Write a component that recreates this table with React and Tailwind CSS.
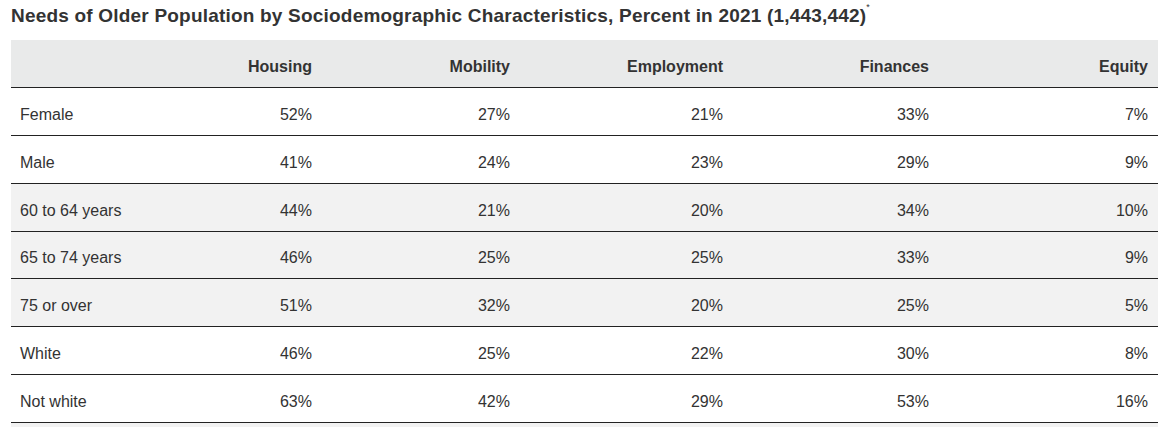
import React from 'react';

const columns = ['Housing', 'Mobility', 'Employment', 'Finances', 'Equity'];
const colWidths = ['w-[111px]', 'w-[198px]', 'w-[213px]', 'w-[206px]', 'w-[219px]'];

const rows = [
    { label: 'Female', values: ['52%', '27%', '21%', '33%', '7%'], shaded: false },
    { label: 'Male', values: ['41%', '24%', '23%', '29%', '9%'], shaded: false },
    { label: '60 to 64 years', values: ['44%', '21%', '20%', '34%', '10%'], shaded: true },
    { label: '65 to 74 years', values: ['46%', '25%', '25%', '33%', '9%'], shaded: true, short: true },
    { label: '75 or over', values: ['51%', '32%', '20%', '25%', '5%'], shaded: true },
    { label: 'White', values: ['46%', '25%', '22%', '30%', '8%'], shaded: false },
    { label: 'Not white', values: ['63%', '42%', '29%', '53%', '16%'], shaded: false },
];

const App = () => {
    return (
        <div className="w-[1160px] h-[427px] overflow-hidden bg-white text-[#333] font-['Liberation_Sans',Arial,sans-serif]">
            {/* Title */}
            <h2 className="pl-[11px] pt-[4px] h-[40px] text-[19px] tracking-[0.2px] font-bold leading-[24px] text-[#333]">
                Needs of Older Population by Sociodemographic Characteristics, Percent in 2021 (1,443,442)
                <sup className="text-[9px] font-normal align-super">*</sup>
            </h2>

            <div className="ml-[11px] w-[1147px]">
                {/* Header */}
                <div className="flex h-[48px] pt-[6px] bg-[#e9eaea] border-b border-[#222] text-[16px] font-bold">
                    <div className="w-[200px] shrink-0" />
                    {columns.map((c, i) => (
                        <div key={c} className={`${colWidths[i]} shrink-0 flex items-center justify-end pr-[10px]`}>
                            {c}
                        </div>
                    ))}
                </div>

                {/* Body rows */}
                {rows.map((r) => (
                    <div
                        key={r.label}
                        className={`flex ${r.short ? 'h-[47px]' : 'h-[48px]'} pt-[6px] border-b border-[#222] text-[16px] ${r.shaded ? 'bg-[#f2f2f2]' : 'bg-white'}`}
                    >
                        <div className="w-[200px] shrink-0 flex items-center pl-[9px]">{r.label}</div>
                        {r.values.map((v, i) => (
                            <div key={i} className={`${colWidths[i]} shrink-0 flex items-center justify-end pr-[10px]`}>
                                {v}
                            </div>
                        ))}
                    </div>
                ))}
                <div className="h-[10px] bg-[#f2f2f2]" />
            </div>
        </div>
    );
};

export default App;
